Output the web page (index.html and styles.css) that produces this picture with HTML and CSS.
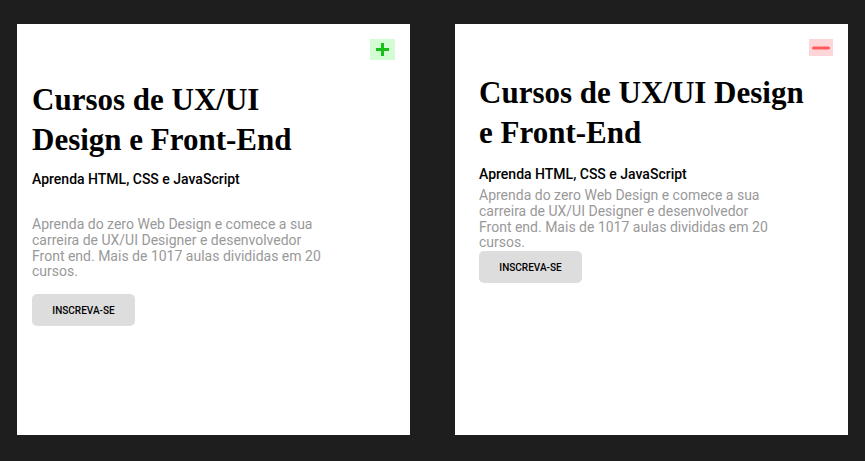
FILE: index.html
```html
<!DOCTYPE html>
<html lang="pt-BR">
<head>
<meta charset="utf-8">
<title>Cursos</title>
<link rel="stylesheet" href="styles.css">
</head>
<body>
<main class="cards">
  <section class="card card--closed">
    <div class="card-top">
      <button class="toggle toggle--plus" aria-label="Expandir">
        <svg width="13" height="13" viewBox="0 0 13 13"><rect x="5" y="0" width="3" height="13" fill="#16c016"/><rect x="0" y="5" width="13" height="3" fill="#16c016"/></svg>
      </button>
    </div>
    <h1 class="title">Cursos de UX/UI Design e Front-End</h1>
    <h2 class="subtitle">Aprenda HTML, CSS e JavaScript</h2>
    <p class="desc">Aprenda do zero Web Design e comece a sua carreira de UX/UI Designer e desenvolvedor Front end. Mais de 1017 aulas divididas em 20 cursos.</p>
    <button class="cta">INSCREVA-SE</button>
  </section>
  <section class="card card--open">
    <div class="card-top">
      <button class="toggle toggle--minus" aria-label="Recolher">
        <svg width="18" height="4" viewBox="0 0 18 4"><rect x="0" y="0.5" width="18" height="3" rx="1.5" fill="#ff5a5f"/></svg>
      </button>
    </div>
    <h1 class="title">Cursos de UX/UI Design e Front-End</h1>
    <h2 class="subtitle">Aprenda HTML, CSS e JavaScript</h2>
    <p class="desc">Aprenda do zero Web Design e comece a sua carreira de UX/UI Designer e desenvolvedor Front end. Mais de 1017 aulas divididas em 20 cursos.</p>
    <button class="cta">INSCREVA-SE</button>
  </section>
</main>
</body>
</html>
```
FILE: styles.css
```css
html, body {
  margin: 0;
  padding: 0;
  background: #1e1e1e;
  height: 100%;
}
body {
  font-family: Roboto, "Liberation Sans", sans-serif;
}
.cards {
  display: flex;
  gap: 45px;
  padding: 24px 0 0 17px;
}
.card {
  box-sizing: border-box;
  width: 393px;
  height: 411px;
  background: #fff;
  padding: 15px 15px;
  display: flex;
  flex-direction: column;
  align-items: flex-start;
}
.card--open {
  padding-left: 24px;
}
.card-top {
  align-self: stretch;
  display: flex;
  justify-content: flex-end;
}
.toggle {
  border: 0;
  padding: 0;
  margin: 0;
  display: flex;
  align-items: center;
  justify-content: center;
  cursor: pointer;
}
.toggle--plus {
  width: 25px;
  height: 21px;
  background: #d4fcd4;
}
.toggle--minus {
  width: 24px;
  height: 17px;
  background: #ffd6d7;
}
.title {
  font-family: "Liberation Serif", serif;
  font-weight: 700;
  font-size: 31px;
  line-height: 40px;
  margin: 20px 0 11px;
  color: #000;
}
.card--closed .title {
  max-width: 300px;
}
.card--open .title {
  max-width: 332px;
  margin-top: 17px;
  margin-bottom: 13px;
}
.subtitle {
  font-family: Roboto, sans-serif;
  font-weight: 500;
  font-size: 14px;
  line-height: 16px;
  margin: 0;
  color: #000;
}
.desc {
  font-family: Roboto, sans-serif;
  font-size: 14px;
  line-height: 15.8px;
  color: #999;
  max-width: 296px;
  margin: 30px 0 14px;
}
.card--open .desc {
  margin: 6px 0 0;
}
.cta {
  width: 103px;
  height: 32px;
  border: 0;
  border-radius: 5px;
  background: #dddddd;
  font-family: Roboto, sans-serif;
  font-weight: 500;
  font-size: 10px;
  color: #000;
  padding: 0;
}
```
